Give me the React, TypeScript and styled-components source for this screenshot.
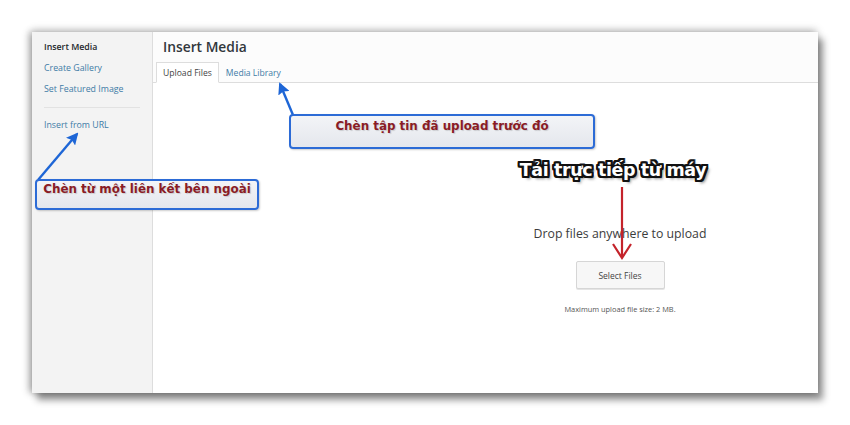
import React from "react";
import styled, { createGlobalStyle } from "styled-components";

const Global = createGlobalStyle`
  html, body { margin: 0; padding: 0; background: #ffffff; }
  * { box-sizing: border-box; }
`;

const Stage = styled.div`
  position: relative;
  width: 850px;
  height: 425px;
  background: #ffffff;
  overflow: hidden;
  padding: 32px 0 0 32px;
  font-family: "Open Sans", "Liberation Sans", sans-serif;
`;

const Frame = styled.div`
  width: 786px;
  height: 361px;
  display: grid;
  grid-template-columns: 121px 1fr;
  background: #ffffff;
  box-shadow: 5px 7px 7px rgba(0, 0, 0, 0.42), -3px 0 7px rgba(0, 0, 0, 0.3), 0 -3px 8px rgba(0, 0, 0, 0.12);
`;

const Sidebar = styled.nav`
  background: #f3f3f3;
  border-right: 1px solid #dddddd;
  padding: 5px 12px 0 12px;
  display: flex;
  flex-direction: column;
`;

const SideItem = styled.div<{ $active?: boolean }>`
  font-size: 8.8px;
  line-height: 21px;
  font-weight: ${(p) => (p.$active ? 600 : 400)};
  color: ${(p) => (p.$active ? "#23282d" : "#3e7ba6")};
  white-space: nowrap;
`;

const Separator = styled.div`
  height: 1px;
  background: #e2e2e2;
  margin: 7px 0 7px 0;
`;

const Main = styled.section`
  display: flex;
  flex-direction: column;
`;

const Header = styled.header`
  background: #fcfcfc;
  border-bottom: 1px solid #dddddd;
  padding: 3px 0 0 3px;
  display: flex;
  flex-direction: column;
`;

const Title = styled.h1`
  margin: 0 0 3px 7px;
  font-size: 13.8px;
  line-height: 24px;
  font-weight: 600;
  color: #32373c;
`;

const Tabs = styled.div`
  display: flex;
  margin-bottom: -1px;
`;

const Tab = styled.div<{ $active?: boolean }>`
  height: 21px;
  padding: 0 6px;
  font-size: 8.6px;
  line-height: 20px;
  color: ${(p) => (p.$active ? "#444444" : "#3e7ba6")};
  background: ${(p) => (p.$active ? "#ffffff" : "transparent")};
  border: 1px solid ${(p) => (p.$active ? "#dddddd" : "transparent")};
  border-bottom-color: ${(p) => (p.$active ? "#ffffff" : "transparent")};
`;

const Uploader = styled.div`
  margin: 141px 0 0 317px;
  width: 300px;
  display: flex;
  flex-direction: column;
  align-items: center;
`;

const DropText = styled.div`
  font-size: 12.3px;
  line-height: 20px;
  color: #3c3c3c;
`;

const SelectButton = styled.button`
  margin-top: 17px;
  width: 89px;
  height: 28px;
  background: #f7f7f7;
  border: 1px solid #d6d6d6;
  border-radius: 2px;
  box-shadow: 0 1px 0 #e5e5e5;
  font-family: "Open Sans", "Liberation Sans", sans-serif;
  font-size: 8.5px;
  color: #444444;
`;

const MaxSize = styled.div`
  margin-top: 14px;
  font-size: 7.4px;
  line-height: 12px;
  color: #555555;
`;

const Callout = styled.div<{ $x: number; $y: number; $w: number; $h: number }>`
  position: absolute;
  left: ${(p) => p.$x}px;
  top: ${(p) => p.$y}px;
  width: ${(p) => p.$w}px;
  height: ${(p) => p.$h}px;
  border: 2px solid #2c6bd6;
  border-radius: 4px;
  background: linear-gradient(#f3f4f7, #e4e7ed);
  box-shadow: 1px 1px 2px rgba(0, 0, 0, 0.2);
  display: flex;
  justify-content: center;
  padding-top: ${(p) => (p.$h > 32 ? 2 : 0)}px;
  font-family: "DejaVu Sans", Verdana, sans-serif;
  font-weight: bold;
  font-size: 11.9px;
  line-height: 16px;
  color: #8a1c26;
  text-shadow: 1px 1px 1px rgba(0, 0, 0, 0.15);
  white-space: nowrap;
`;

const OutlineLabel = styled.div`
  position: absolute;
  left: 513px;
  top: 157px;
  width: 200px;
  text-align: center;
  font-family: "DejaVu Sans", Verdana, sans-serif;
  font-weight: bold;
  font-size: 17.5px;
  line-height: 26px;
  letter-spacing: -0.4px;
  color: #ffffff;
  white-space: nowrap;
  text-shadow:
    2px 0 0 #111, -2px 0 0 #111, 0 2px 0 #111, 0 -2px 0 #111,
    2px 2px 0 #111, -2px -2px 0 #111, 2px -2px 0 #111, -2px 2px 0 #111,
    1px 2px 0 #111, -1px 2px 0 #111, 2px 1px 0 #111, -2px 1px 0 #111,
    1px -2px 0 #111, -1px -2px 0 #111, 2px -1px 0 #111, -2px -1px 0 #111,
    3px 3px 3px rgba(0, 0, 0, 0.5);
`;

const Overlay = styled.svg`
  position: absolute;
  left: 0;
  top: 0;
  width: 850px;
  height: 425px;
  pointer-events: none;
`;

export default function App() {
  return (
    <>
      <Global />
      <Stage>
        <Frame>
          <Sidebar>
            <SideItem $active>Insert Media</SideItem>
            <SideItem>Create Gallery</SideItem>
            <SideItem>Set Featured Image</SideItem>
            <Separator />
            <SideItem>Insert from URL</SideItem>
          </Sidebar>
          <Main>
            <Header>
              <Title>Insert Media</Title>
              <Tabs>
                <Tab $active>Upload Files</Tab>
                <Tab>Media Library</Tab>
              </Tabs>
            </Header>
            <Uploader>
              <DropText>Drop files anywhere to upload</DropText>
              <SelectButton>Select Files</SelectButton>
              <MaxSize>Maximum upload file size: 2 MB.</MaxSize>
            </Uploader>
          </Main>
        </Frame>

        <Overlay viewBox="0 0 850 425">
          <defs>
            <marker id="blueHead" markerWidth="12" markerHeight="12" refX="10" refY="6" orient="auto" markerUnits="userSpaceOnUse">
              <path d="M0,0 L12,6 L0,12 L2,6 z" fill="#1e66d6" />
            </marker>
          </defs>
          <line x1="38" y1="180" x2="77" y2="134" stroke="#1e66d6" strokeWidth="2.4" markerEnd="url(#blueHead)" />
          <line x1="293" y1="115" x2="280" y2="84" stroke="#1e66d6" strokeWidth="2.4" markerEnd="url(#blueHead)" />
          <line x1="622" y1="187" x2="622" y2="257" stroke="#c4232b" strokeWidth="2.2" />
          <polyline points="613,244 622,258 631,244" fill="none" stroke="#c4232b" strokeWidth="2.2" />
        </Overlay>

        <Callout $x={35} $y={179} $w={224} $h={31}>Chèn từ một liên kết bên ngoài</Callout>
        <Callout $x={289} $y={114} $w={306} $h={35}>Chèn tập tin đã upload trước đó</Callout>
        <OutlineLabel>Tải trực tiếp từ máy</OutlineLabel>
      </Stage>
    </>
  );
}
